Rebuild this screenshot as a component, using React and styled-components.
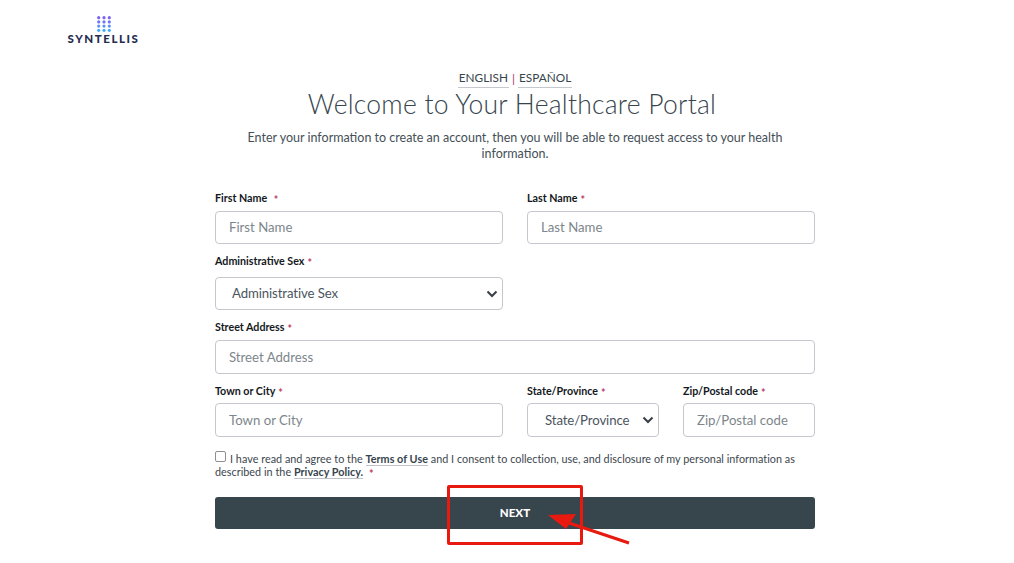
import React from "react";
import styled, { createGlobalStyle } from "styled-components";

const Global = createGlobalStyle`
  html, body { margin: 0; padding: 0; background: #fff; }
  body { font-family: "Lato", "Liberation Sans", sans-serif; color: #37454d; }
  * { box-sizing: border-box; }
`;
const Page = styled.div`
  position: relative;
  width: 1014px;
  height: 563px;
  overflow: hidden;
`;
const Brand = styled.div`
  position: absolute;
  left: 67px;
  top: 16px;
  width: 73px;
  display: flex;
  flex-direction: column;
  align-items: center;
`;
const BrandName = styled.span`
  font-family: "Lato", sans-serif;
  font-weight: 900;
  font-size: 11.5px;
  line-height: 13px;
  letter-spacing: 1.55px;
  color: #262c50;
  white-space: nowrap;
`;
const Main = styled.main`
  width: 600px;
  margin: 0 0 0 215px;
  padding-top: 70px;
`;
const Languages = styled.div`
  display: flex;
  justify-content: center;
  align-items: center;
  gap: 3px;
  height: 18px;
  font-size: 11.8px;
  line-height: 16px;
  color: #37454d;
`;
const Lang = styled.a`
  border-bottom: 1px solid #c6c8d0;
  padding: 0 1px 1px;
`;
const Pipe = styled.span`
  color: #a33a70;
  font-size: 12px;
`;
const Title = styled.h1`
  margin: 0;
  padding-right: 6px;
  font-size: 26.5px;
  line-height: 32px;
  font-weight: 300;
  text-align: center;
  letter-spacing: 0.25px;
  color: #37454d;
`;
const Intro = styled.p`
  margin: 10px auto 0;
  width: 560px;
  font-size: 12.5px;
  line-height: 16px;
  font-weight: 400;
  text-align: center;
  letter-spacing: 0px;
  color: #454f57;
`;
const Form = styled.form`
  margin-top: 29px;
  display: flex;
  flex-direction: column;
`;
const Row = styled.div`
  display: grid;
  grid-template-columns: ${(p) => p.$cols || "288px 288px"};
  column-gap: 24px;
  margin-top: ${(p) => p.$top || 0}px;
`;
const Field = styled.div`
  display: flex;
  flex-direction: column;
`;
const Label = styled.label`
  font-size: 10.7px;
  line-height: 13px;
  font-weight: 700;
  color: #14181c;
  height: 13px;
  margin-bottom: ${(p) => p.$gap || 7}px;
  white-space: nowrap;
`;
const Star = styled.span`
  color: #b8395f;
  margin-left: ${(p) => p.$left || 3}px;
  font-weight: 700;
  line-height: 0;
  vertical-align: -2px;
`;
const Input = styled.input`
  width: 100%;
  height: ${(p) => p.$h || 33}px;
  border: 1px solid #c5c7cd;
  border-radius: 4px;
  padding: 0 13px ${(p) => p.$lift || 0}px;
  font-family: inherit;
  font-size: 13.2px;
  letter-spacing: 0;
  color: #37454d;
  background: #fff;
  &::placeholder { color: #7d868c; opacity: 1; }
`;
const SelectWrap = styled.div`
  position: relative;
  height: ${(p) => p.$h || 33}px;
  border: 1px solid #c5c7cd;
  border-radius: 4px;
  display: flex;
  align-items: center;
  padding-left: ${(p) => p.$pad || 16}px;
  padding-bottom: ${(p) => p.$lift || 0}px;
  font-size: 13.2px;
  letter-spacing: -0.1px;
  color: #4c5560;
  white-space: nowrap;
  svg { position: absolute; right: 4px; top: 12px; }
`;
const Consent = styled.div`
  margin-top: 14px;
  font-size: 10.8px;
  line-height: 13px;
  letter-spacing: 0.03px;
  color: #3c464e;
  width: 600px;
`;
const Check = styled.span`
  display: inline-block;
  width: 11px;
  height: 11px;
  margin-right: 4px;
  border: 1px solid #8f8f8f;
  border-radius: 2px;
  vertical-align: 1px;
  background: #fff;
`;
const DocLink = styled.a`
  font-weight: 700;
  color: #37454d;
  border-bottom: 1px solid #bfc1ca;
`;
const Next = styled.button`
  margin-top: 19px;
  width: 600px;
  height: 32px;
  border: 0;
  border-radius: 3px;
  background: #37454d;
  color: #fff;
  font-family: inherit;
  font-weight: 900;
  font-size: 11.5px;
  padding: 0 0 2px;
  letter-spacing: 0.1px;
`;
const Highlight = styled.div`
  position: absolute;
  left: 447px;
  top: 485px;
  width: 136px;
  height: 60px;
  border: 3px solid #e8190f;
  border-radius: 2px;
  pointer-events: none;
`;
const Arrow = styled.svg`
  position: absolute;
  left: 540px;
  top: 505px;
  pointer-events: none;
`;

const Req = ({ left }) => <Star $left={left}>*</Star>;
const Chevron = () => (
  <svg width="12" height="8" viewBox="0 0 12 8">
    <path d="M1.5 1.5 6 6l4.5-4.5" fill="none" stroke="#3a3f45" strokeWidth="2" />
  </svg>
);
const Logo = () => {
  const colors = ["#7a62f0", "#6f74f3", "#5f90f6", "#45aaf8"];
  return (
    <svg width="14" height="16" viewBox="0 0 14 16">
      {[1.7, 7, 12.3].map((x) =>
        colors.map((c, i) => <circle key={x + c} cx={x} cy={1.7 + i * 4.2} r="1.6" fill={c} />)
      )}
    </svg>
  );
};

export default function App() {
  return (
    <Page>
      <Global />
      <Brand>
        <Logo />
        <BrandName>SYNTELLIS</BrandName>
      </Brand>
      <Main>
        <Languages>
          <Lang>ENGLISH</Lang>
          <Pipe>|</Pipe>
          <Lang>ESPAÑOL</Lang>
        </Languages>
        <Title>Welcome to Your Healthcare Portal</Title>
        <Intro>
          Enter your information to create an account, then you will be able to request access to your health information.
        </Intro>
        <Form>
          <Row>
            <Field>
              <Label>First Name <Req left={4} /></Label>
              <Input $lift={1} placeholder="First Name" />
            </Field>
            <Field>
              <Label>Last Name<Req /></Label>
              <Input $lift={1} placeholder="Last Name" />
            </Field>
          </Row>
          <Row $top={10}>
            <Field>
              <Label $gap={10}>Administrative Sex<Req /></Label>
              <SelectWrap $lift={1}>Administrative Sex<Chevron /></SelectWrap>
            </Field>
          </Row>
          <Row $top={10} $cols="600px">
            <Field>
              <Label>Street Address<Req /></Label>
              <Input $h={34} $lift={1} placeholder="Street Address" />
            </Field>
          </Row>
          <Row $top={10} $cols="288px 132px 132px">
            <Field>
              <Label $gap={6}>Town or City<Req /></Label>
              <Input $h={34} placeholder="Town or City" />
            </Field>
            <Field>
              <Label $gap={6}>State/Province<Req /></Label>
              <SelectWrap $pad={17} $h={34}>State/Province<Chevron /></SelectWrap>
            </Field>
            <Field>
              <Label $gap={6}>Zip/Postal code<Req /></Label>
              <Input $h={34} placeholder="Zip/Postal code" />
            </Field>
          </Row>
          <Consent>
            <Check />
            I have read and agree to the <DocLink>Terms of Use</DocLink> and I consent to collection, use, and disclosure of my personal information as described in the <DocLink>Privacy Policy.</DocLink> <Req />
          </Consent>
          <Next type="button">NEXT</Next>
        </Form>
      </Main>
      <Highlight />
      <Arrow width="92" height="40" viewBox="0 0 92 40">
        <path d="M89 38 26 17" stroke="#e8190f" strokeWidth="3" />
        <path d="M8 10 36 9 26 24Z" fill="#e8190f" />
      </Arrow>
    </Page>
  );
}
